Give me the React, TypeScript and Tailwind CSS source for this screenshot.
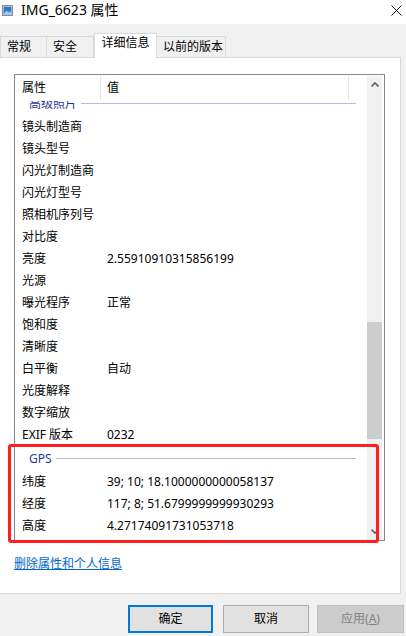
import React from "react";

const rows1: [string, string][] = [
  ["镜头制造商", ""],
  ["镜头型号", ""],
  ["闪光灯制造商", ""],
  ["闪光灯型号", ""],
  ["照相机序列号", ""],
  ["对比度", ""],
  ["亮度", "2.55910910315856199"],
  ["光源", ""],
  ["曝光程序", "正常"],
  ["饱和度", ""],
  ["清晰度", ""],
  ["白平衡", "自动"],
  ["光度解释", ""],
  ["数字缩放", ""],
  ["EXIF 版本", "0232"],
];

const rows2: [string, string][] = [
  ["纬度", "39; 10; 18.1000000000058137"],
  ["经度", "117; 8; 51.6799999999930293"],
  ["高度", "4.27174091731053718"],
];

function Row({ name, value }: { name: string; value: string }) {
  return (
    <div className="flex h-[22px] items-center text-[12px] leading-[22px] text-black">
      <div className="w-[92px] pl-[7px] whitespace-nowrap">{name}</div>
      <div className="whitespace-nowrap">{value}</div>
    </div>
  );
}

function Group({ title }: { title: string }) {
  return (
    <div className="flex h-[25px] items-center pl-[14px] pr-[11px]">
      <span className="text-[12px] leading-[16px] text-[#1e3c96] whitespace-nowrap">{title}</span>
      <div className="ml-[4px] h-px flex-1 bg-[#b4bcd8]" />
    </div>
  );
}

function Tab({ label, w, selected, first }: { label: string; w: string; selected?: boolean; first?: boolean }) {
  if (selected) {
    return (
      <div
        className={`relative z-10 -mb-[1px] flex h-[25px] items-start justify-center border border-b-0 border-[#d9d9d9] bg-white pt-[1px] text-[12px] leading-[16px] text-black ${w}`}
      >
        {label}
      </div>
    );
  }
  return (
    <div
      className={`flex h-[21px] items-center border-t border-r border-[#d9d9d9] bg-[#f0f0f0] pl-[6px] text-[12px] leading-[16px] text-black ${first ? "border-l" : ""} ${w}`}
    >
      {label}
    </div>
  );
}

export default function App() {
  return (
    <div className="relative flex h-[636px] w-[406px] flex-col overflow-hidden bg-[#f0f0f0] font-['Noto_Sans','Noto_Sans_CJK_SC',sans-serif]">
      {/* Title bar */}
      <div className="flex h-[24px] items-start bg-white pt-[1px]">
        <svg className="ml-[2px] mt-[4px]" width="11" height="11" viewBox="0 0 11 11">
          <rect x="0.5" y="0.5" width="10" height="10" fill="#ffffff" stroke="#8a8a8a" />
          <rect x="1.5" y="1.5" width="8" height="8" fill="#2f78c8" />
          <path d="M1.5 9.5 L4.5 5.5 L6.5 7.5 L8 6 L9.5 9.5 Z" fill="#9fd0f5" />
        </svg>
        <span className="ml-[8px] text-[14px] leading-[18px] text-black">IMG_6623 属性</span>
        <div className="flex-1" />
        <svg className="mr-[4px] mt-[4px]" width="11" height="11" viewBox="0 0 11 11">
          <path d="M0.5 0.5 L10.5 10.5 M10.5 0.5 L0.5 10.5" stroke="#111" strokeWidth="1" />
        </svg>
      </div>

      {/* Tabs */}
      <div className="relative z-10 mt-[9px] flex h-[24px] items-end">
        <Tab label="常规" w="w-[47px]" first />
        <Tab label="安全" w="w-[47px]" />
        <Tab label="详细信息" w="w-[63px]" selected />
        <Tab label="以前的版本" w="w-[69px]" />
      </div>

      {/* Panel */}
      <div className="flex">
        <div className="h-[537px] w-[401px] border border-l-0 border-[#d9d9d9] bg-white pl-[14px] pt-[16px]">
          {/* List box */}
          <div className="flex h-[467px] w-[371px] border border-[#828790]">
            <div className="flex w-[352px] flex-col">
              <div className="flex h-[26px] items-center text-[12px] leading-[16px] text-black">
                <div className="w-[85px] pl-[7px]">属性</div>
                <div className="h-[24px] w-px bg-[#e5e5e5]" />
                <div className="w-[247px] pl-[6px]">值</div>
                <div className="h-[24px] w-px bg-[#e5e5e5]" />
              </div>
              <div className="flex-1 overflow-hidden">
                <div className="-mt-[10px]">
                  <Group title="高级照片" />
                  {rows1.map(([n, v]) => (
                    <Row key={n} name={n} value={v} />
                  ))}
                  <Group title="GPS" />
                  {rows2.map(([n, v]) => (
                    <Row key={n} name={n} value={v} />
                  ))}
                </div>
              </div>
            </div>
            {/* Scrollbar */}
            <div className="mt-[1px] flex w-[15px] flex-col bg-[#f0f0f0]">
              <div className="flex h-[17px] items-center justify-center">
                <svg width="8" height="5" viewBox="0 0 8 5">
                  <path d="M0.5 4.5 L4 1 L7.5 4.5" stroke="#606060" strokeWidth="1.6" fill="none" />
                </svg>
              </div>
              <div className="h-[229px]" />
              <div className="h-[117px] bg-[#cdcdcd]" />
              <div className="flex-1" />
              <div className="flex h-[17px] items-center justify-center">
                <svg width="8" height="5" viewBox="0 0 8 5">
                  <path d="M0.5 0.5 L4 4 L7.5 0.5" stroke="#606060" strokeWidth="1.6" fill="none" />
                </svg>
              </div>
            </div>
            <div className="w-[2px]" />
          </div>
          <div className="mt-[15px] text-[12px] leading-[16px] text-[#0066cc] underline">删除属性和个人信息</div>
        </div>
        <div className="flex-1" />
      </div>

      {/* Buttons */}
      <div className="flex justify-end pr-[2px] pt-[11px]">
        <div className="flex h-[28px] w-[85px] items-center justify-center border-2 border-[#0078d7] bg-[#e1e1e1] text-[12px] text-black">
          确定
        </div>
        <div className="ml-[10px] flex h-[28px] w-[86px] items-center justify-center border border-[#adadad] bg-[#e1e1e1] text-[12px] text-black">
          取消
        </div>
        <div className="ml-[8px] flex h-[28px] w-[87px] items-center justify-center border border-[#bfbfbf] bg-[#cccccc] text-[12px] text-[#838383]">
          应用(<span className="underline">A</span>)
        </div>
      </div>

      {/* Red annotation */}
      <div className="pointer-events-none absolute left-[8px] top-[444px] h-[99px] w-[371px] rounded-[3px] border-[3px] border-[#ff1f1f]" />
    </div>
  );
}
